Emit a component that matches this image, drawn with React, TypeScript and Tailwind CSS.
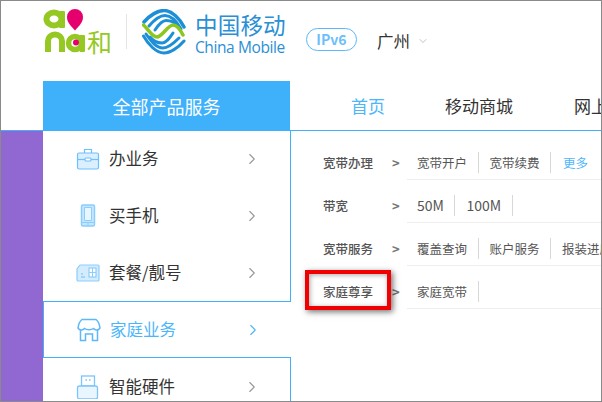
import { ChevronRight, ChevronDown } from 'lucide-react'

const FONT = "font-['Noto_Sans_CJK_SC','Noto_Sans',sans-serif]"

// Logo "and 和"
function AndLogo() {
  return (
    <div className="relative w-[72px] h-[46px]">
      <svg width="44" height="46" viewBox="0 0 44 46" className="block">
        <ellipse cx="11" cy="10" rx="7.5" ry="6.5" fill="none" stroke="#96c823" strokeWidth="6" />
        <rect x="16" y="2" width="6" height="17" rx="1" fill="#96c823" />
        <path d="M5 43V32a7 6.5 0 0 1 14 0V43" fill="none" stroke="#96c823" strokeWidth="6" />
        <circle cx="32" cy="34" r="6.500" fill="none" stroke="#96c823" strokeWidth="5.500" />
        <rect x="36.500" y="26" width="5.500" height="17" rx="1" fill="#96c823" />
        <path d="M32 21.500C27 16 24 13 24 8a8 8 0 0 1 16 0c0 5-3 8-8 13.500z" fill="#e6006e" />
        <circle cx="33" cy="33.500" r="3" fill="#e6006e" />
      </svg>
      <span className="absolute left-[44px] top-[17px] text-[25px] leading-[30px] text-[#96c823]">和</span>
    </div>
  )
}

// Logo circle of China Mobile
function MobileLogo() {
  return (
    <svg width="46" height="46" viewBox="0 0 46 46" fill="none" strokeLinecap="round">
      <path d="M2 13C8 6 16 1.500 22 1.500C30 1.500 38 10 42 18" stroke="#1d8fd6" strokeWidth="3.500" />
      <path d="M7 17C13 10 18 6.500 23 6.500C30 6.500 35 13 39 20" stroke="#1d8fd6" strokeWidth="3" />
      <path d="M13 21C17 15 20 11.500 24 11.500C28 11.500 33 13 36 17" stroke="#1d8fd6" strokeWidth="3" />
      <path d="M1.500 16C6 20 10 28 15 28C20 28 26 16 31 16C35 16 38 20 41 26" stroke="#8cc61e" strokeWidth="3.500" />
      <path d="M42 32C36 39 28 44 22 44C14 44 6 35 1.500 27" stroke="#1d8fd6" strokeWidth="3" />
      <path d="M37 29C31 35 26 39 21 39C14 39 9 32 4 25" stroke="#1d8fd6" strokeWidth="3" />
      <path d="M31 24C27 30 24 34 20 34C16 34 11 32 8 28" stroke="#1d8fd6" strokeWidth="3" />
    </svg>
  )
}

function Case() {
  return (
    <svg width="24" height="24" viewBox="0 0 24 24" fill="#dcefff" stroke="#6cc0fb" strokeWidth="1.200">
      <path d="M8.500 6V2.500h7V6" fill="none" />
      <rect x="1.500" y="6" width="21" height="16" rx="1.500" />
      <path d="M1.500 12.500h21" />
      <rect x="9" y="11" width="6" height="3" rx="1" fill="#fff" />
    </svg>
  )
}

function Phone() {
  return (
    <svg width="24" height="24" viewBox="0 0 24 24" fill="none" stroke="#8bcdfc" strokeWidth="1.500">
      <rect x="5.500" y="1" width="13" height="21" rx="1.500" fill="#c5e6ff" />
      <path d="M8.500 3.500h7v13h-7z" fill="#eaf6ff" strokeWidth="1" />
      <path d="M6 18.500h12M12 18.500V22" strokeWidth="1" />
    </svg>
  )
}

function Sim() {
  return (
    <svg width="24" height="24" viewBox="0 0 24 24" fill="none" stroke="#8bcdfc" strokeWidth="1.200">
      <path d="M4 4h18a1 1 0 0 1 1 1v14a1 1 0 0 1-1 1H2a1 1 0 0 1-1-1V8z" fill="#d5ecff" />
      <rect x="13" y="7" width="7" height="9" fill="#fff" />
      <path d="M13 11.500h7M16.500 7v9" strokeWidth="1" />
      <path d="M5 13h2M5 16h4" strokeWidth="1.500" />
    </svg>
  )
}

function Store() {
  return (
    <svg width="24" height="24" viewBox="0 0 24 24" fill="none" stroke="#5cb8fa" strokeWidth="1.500">
      <path d="M5 1.500h14c2 1.500 3.500 5 4 8.500-1.500 2.500-5 2.500-6.500 .5-2 1.500-7 1.500-9 0-1.500 2-5 2-6.500-.5.500-3.500 2-7 4-8.500z" />
      <path d="M3.500 12v10.500h5V16h7v6.500h5V12" />
    </svg>
  )
}

function Usb() {
  return (
    <svg width="24" height="24" viewBox="0 0 24 24" fill="none" stroke="#7cc4fb" strokeWidth="1.300">
      <rect x="5.500" y="1" width="13" height="10" />
      <path d="M9.500 5h1.500M13 5h1.500" />
      <rect x="1.500" y="11" width="20" height="13" rx="2" fill="#eaf6ff" />
    </svg>
  )
}

const menu = [
  { name: '办业务', icon: <Case />, lift: 'mb-[2px]' },
  { name: '买手机', icon: <Phone />, lift: 'mb-[1px]' },
  { name: '套餐/靓号', icon: <Sim />, lift: 'mb-[1px]' },
  { name: '家庭业务', icon: <Store />, lift: 'mb-[1px]', active: true },
  { name: '智能硬件', icon: <Usb />, lift: 'mb-0' },
]

const rows = [
  { label: '宽带办理', items: ['宽带开户', '宽带续费'], more: true },
  { label: '带宽', items: ['50M', '100M'], latin: true },
  { label: '宽带服务', items: ['覆盖查询', '账户服务', '报装进度'] },
  { label: '家庭尊享', items: ['家庭宽带'] },
]

export default function App() {
  return (
    <div className={`relative w-[602px] h-[402px] overflow-hidden bg-white border border-[#8a8a8a] ${FONT}`}>
      {/* cabecera */}
      <div className="h-[80px] flex items-start">
        <div className="ml-[42px] mt-[8px]"><AndLogo /></div>
        <div className="ml-[11px] mt-[13px] w-px h-[35px] bg-[#e4e4e4]" />
        <div className="ml-[15px] mt-[8px]"><MobileLogo /></div>
        <div className="ml-[7px] mt-[9px] flex flex-col text-[#2a8fd4] w-[95px]">
          <span className="text-[22.5px] leading-[28px] tracking-[0.2px] whitespace-nowrap">中国移动</span>
          <span className="text-[15.5px] leading-[19px] font-['Open_Sans',sans-serif] tracking-[-0.4px] whitespace-nowrap">China Mobile</span>
        </div>
        <div className="ml-[16px] mt-[27px] w-[51px] h-[23px] rounded-full border border-[#5ab8fb] text-[#6cbffb] text-[14px] leading-[20px] font-bold text-center">IPv6</div>
        <span className="ml-[20px] mt-[27px] text-[16.5px] leading-[26px] text-[#333]">广州</span>
        <ChevronDown className="ml-[7px] mt-[34px] text-[#999]" size={12} strokeWidth={1.2} />
      </div>

      {/* navegacion */}
      <div className="h-[50px] flex pl-[42px] border-b border-[#3fb1fb]">
        <div className="w-[247px] h-[50px] shrink-0 bg-[#3fb1fb] text-white text-[18px] leading-[50px] text-center">全部产品服务</div>
        <div className="flex text-[17px] leading-[50px] text-[#333] whitespace-nowrap">
          <span className="ml-[61px] text-[#4db6fb]">首页</span>
          <span className="ml-[60px]">移动商城</span>
          <span className="ml-[61px]">网上营业厅</span>
        </div>
      </div>

      <div className="flex h-[270px]">
        <div className="w-[42px] bg-[#9168d2] shrink-0" />
        {/* menu lateral */}
        <div className="w-[248px] shrink-0 flex flex-col">
          {menu.map((m, i) => (
            <div
              key={m.name}
              className={
                m.active
                  ? 'h-[57px] w-[248px] shrink-0 flex items-center pl-[33px] bg-white border border-r-0 border-[#3fb1fb]'
                  : `${i === 0 ? 'h-[56px]' : 'h-[57px]'} shrink-0 flex items-center pl-[33px] border-r border-[#3fb1fb]`
              }
            >
              <span className="w-[24px] flex justify-center">{m.icon}</span>
              <span className={`ml-[9px] ${m.lift} text-[16.5px] ${m.active ? 'text-[#4db6fb]' : 'text-[#333]'}`}>{m.name}</span>
              <ChevronRight
                size={18}
                strokeWidth={1.5}
                className={`ml-auto mr-[29px] ${m.active ? 'text-[#4db6fb]' : 'text-[#999]'}`}
              />
            </div>
          ))}
        </div>
        {/* panel derecho */}
        <div className="flex-1 min-w-0 flex flex-col pt-[6px] pl-[32px] overflow-hidden">
          {rows.map(r => (
            <div key={r.label} className="h-[43px] shrink-0 flex text-[12.5px] text-[#555] whitespace-nowrap">
              <span className="w-[69px] shrink-0 pt-[15px] leading-[21px] font-medium">{r.label}</span>
              <span className="w-[15px] shrink-0 pt-[15px] leading-[21px] font-bold text-[#777] text-[13px]">&gt;</span>
              <div className="flex-1 min-w-0 h-[43px] flex items-start pt-[15px] border-b border-[#eeeeee]">
                {r.items.map((t, i) => (
                  <span key={t} className={`h-[21px] leading-[21px] shrink-0 border-r border-[#d8d8d8] pr-[10.5px] ${i === 0 ? 'pl-[10px]' : 'pl-[11px]'} ${r.latin ? 'text-[14px]' : ''}`}>{t}</span>
                ))}
                {r.more && <span className="pl-[12px] leading-[21px] text-[#4db6fb]">更多</span>}
              </div>
            </div>
          ))}
        </div>
      </div>

      {/* recuadro rojo */}
      <div className="absolute left-[304px] top-[269px] w-[86px] h-[40px] border-[4px] border-[#f00000] shadow-[2px_2px_6px_rgba(0,0,0,0.55),inset_1px_1px_5px_rgba(0,0,0,0.35)]" />
    </div>
  )
}
